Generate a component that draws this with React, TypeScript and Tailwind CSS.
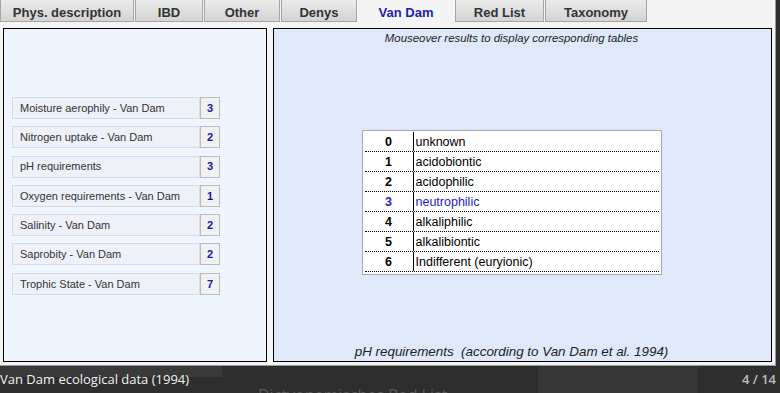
import React from "react";

const tabs = [
  { label: "Phys. description", w: "w-[134px]" },
  { label: "IBD", w: "w-[68px]" },
  { label: "Other", w: "w-[76px]" },
  { label: "Denys", w: "w-[76px]" },
  { label: "Van Dam", w: "w-[96px]", active: true },
  { label: "Red List", w: "w-[89px]" },
  { label: "Taxonomy", w: "w-[102px]" },
];

const items = [
  { label: "Moisture aerophily - Van Dam", n: 3 },
  { label: "Nitrogen uptake - Van Dam", n: 2 },
  { label: "pH requirements", n: 3 },
  { label: "Oxygen requirements - Van Dam", n: 1 },
  { label: "Salinity - Van Dam", n: 2 },
  { label: "Saprobity - Van Dam", n: 2 },
  { label: "Trophic State - Van Dam", n: 7 },
];

const rows = [
  { n: "0", t: "unknown" },
  { n: "1", t: "acidobiontic" },
  { n: "2", t: "acidophilic" },
  { n: "3", t: "neutrophilic", hi: true },
  { n: "4", t: "alkaliphilic" },
  { n: "5", t: "alkalibiontic" },
  { n: "6", t: "Indifferent (euryionic)" },
];

const sans = { fontFamily: '"Liberation Sans", Arial, sans-serif' };

export default function App() {
  return (
    <div className="w-[780px] h-[393px] overflow-hidden bg-[#2e2e2e] flex flex-col" style={sans}>
      {/* light frame */}
      <div className="w-[776px] h-[366px] bg-[#f4f4f4] border-r border-b border-[#9a9a9a] flex flex-col">
        {/* tabs */}
        <div className="flex gap-[1px] h-[22px]">
          {tabs.map((t) =>
            t.active ? (
              <div
                key={t.label}
                className={`${t.w} h-[22px] pt-[4px] flex items-center justify-center text-[13px] font-bold text-[#1f1fb0]`}
              >
                {t.label}
              </div>
            ) : (
              <div
                key={t.label}
                className={`${t.w} h-[22px] pt-[4px] flex items-center justify-center text-[13px] font-bold text-[#333] border-x border-b border-[#a5a5a5] bg-linear-to-b from-[#ececec] to-[#d3d3d3]`}
              >
                {t.label}
              </div>
            )
          )}
        </div>
        {/* panels */}
        <div className="flex gap-[6px] pl-[3px] pt-[6px]">
          <div className="w-[264px] h-[334px] border border-black bg-[#eff5fe] pt-[68px] pl-[8px]">
            <div className="flex flex-col gap-[7.3px]">
              {items.map((it) => (
                <div key={it.label} className="flex h-[22px] w-[208px]">
                  <div className="flex-1 border border-[#d6dbe2] bg-[#eef2f8] flex items-center pl-[7px] text-[11px] text-[#333]">
                    {it.label}
                  </div>
                  <div className="w-[20px] border border-[#b9bcc2] bg-[#f1f1f1] flex items-center justify-center text-[11px] font-bold text-[#1515a8]">
                    {it.n}
                  </div>
                </div>
              ))}
            </div>
          </div>
          <div className="w-[499px] h-[334px] border border-black bg-[#e0e9fb] flex flex-col items-center pr-[22px]">
            <div className="mt-[1px] text-[11.4px] italic text-[#222]">
              Mouseover results to display corresponding tables
            </div>
            <div className="mt-[83px] w-[300px] h-[145px] border border-[#a8a8a8] bg-white px-[2px] pt-[1px]">
              {rows.map((r) => (
                <div
                  key={r.n}
                  className={`flex h-[20px] border-b border-dotted border-black text-[12.5px] ${
                    r.hi ? "text-[#2222c8]" : "text-black"
                  }`}
                >
                  <div className="w-[49px] border-r border-black flex items-center justify-center pt-[2px] font-bold">
                    {r.n}
                  </div>
                  <div className="flex-1 flex items-center pl-[2px] pt-[2px]">{r.t}</div>
                </div>
              ))}
            </div>
            <div className="mt-auto mb-[-1px] text-[13.4px] italic text-[#222] whitespace-pre">
              {"pH requirements  (according to Van Dam et al. 1994)"}
            </div>
          </div>
        </div>
      </div>
      {/* bottom dark caption bar */}
      <div className="relative flex-1 w-[780px]">
        <div className="absolute left-0 top-0 w-[222px] h-[11px] bg-[#3a3a3a]" />
        <div className="absolute left-[538px] top-0 w-[160px] h-[27px] bg-[#363636]" />
        <div
          className="absolute left-[258px] top-[17px] text-[16px] text-[#5a5a5a]"
          style={{ fontFamily: '"Open Sans", sans-serif' }}
        >
          Dictyonemisches Rod List
        </div>
        <div
          className="absolute left-0 top-[4px] text-[13px] text-[#f2f2f2]"
          style={{ fontFamily: '"Open Sans", sans-serif' }}
        >
          Van Dam ecological data (1994)
        </div>
        <div
          className="absolute right-[4px] top-[4px] text-[13px] font-semibold text-[#bdbdbd]"
          style={{ fontFamily: '"Open Sans", sans-serif' }}
        >
          4 / 14
        </div>
      </div>
    </div>
  );
}
